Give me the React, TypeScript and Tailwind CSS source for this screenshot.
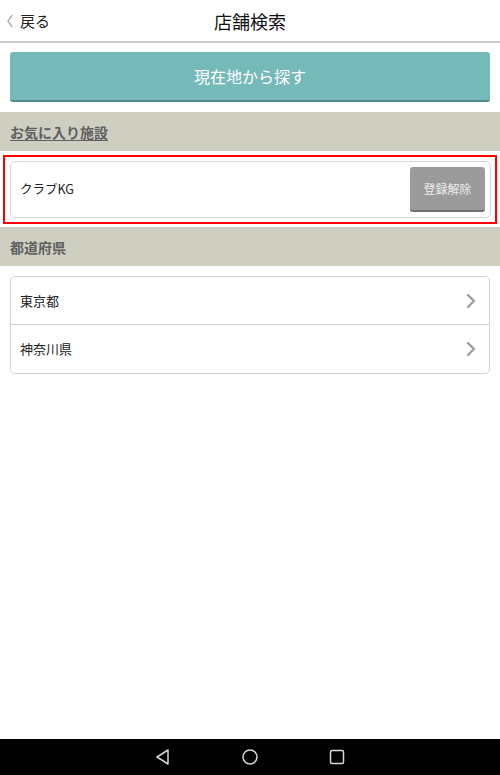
import React from "react";

const Chevron = () => (
  <svg width="10" height="16" viewBox="0 0 10 16" fill="none">
    <path d="M2 2l6 6-6 6" stroke="#9a9a9a" strokeWidth="2.2" strokeLinecap="round" strokeLinejoin="round" />
  </svg>
);

export default function App() {
  return (
    <div
      className="w-[500px] h-[775px] flex flex-col bg-white overflow-hidden"
      style={{ fontFamily: '"Noto Sans CJK JP", "Noto Sans", sans-serif' }}
    >
      <div className="flex-1 flex flex-col">
        {/* Header */}
        <div className="relative h-[43px] flex items-center justify-center border-b-2 border-[#c9c9c9] shrink-0">
          <div className="absolute left-[6px] top-0 h-full flex items-center gap-[6px]">
            <svg width="8" height="14" viewBox="0 0 8 14" fill="none">
              <path d="M6 1.5L2 7l4 5.5" stroke="#b0b0b0" strokeWidth="1.5" strokeLinecap="round" strokeLinejoin="round" />
            </svg>
            <span className="text-[15px] text-[#222] leading-none">戻る</span>
          </div>
          <span className="text-[18px] text-[#111] leading-none">店舗検索</span>
        </div>

        {/* Location button */}
        <div className="px-[10px] pt-[9px] pb-[10px]">
          <button className="w-full h-[50px] rounded-[3px] bg-[#76b9b9] border-b-2 border-[#4d8c8b] text-white text-[16px] leading-none">
            現在地から探す
          </button>
        </div>

        {/* Favorites section */}
        <div className="h-[39px] bg-[#cecec1] flex items-center px-[10px]">
          <span className="text-[14px] text-[#5f5f5f] font-bold underline underline-offset-2 leading-none">お気に入り施設</span>
        </div>
        <div className="pt-[4px] pb-[3px] px-[3px]">
          <div className="border-2 border-[#ff0000] py-[4px] pl-[5px] pr-[4px]">
            <div className="h-[57px] rounded-[5px] border border-[#d6d6d6] flex items-center justify-between pl-[9px] pr-[5px]">
              <span className="text-[12.5px] text-[#222]">クラブKG</span>
              <button className="w-[75px] h-[45px] rounded-[3px] bg-[#9b9b9b] border-b-2 border-[#707070] text-[12px] text-[#ececec]">
                登録解除
              </button>
            </div>
          </div>
        </div>

        {/* Prefecture section */}
        <div className="h-[39px] bg-[#cecec1] flex items-center px-[10px]">
          <span className="text-[14px] text-[#5f5f5f] font-bold leading-none">都道府県</span>
        </div>
        <div className="px-[10px] pt-[10px]">
          <div className="rounded-[5px] border border-[#d3d3d3] flex flex-col">
            <div className="h-[48px] flex items-center justify-between pl-[9px] pr-[13px] border-b border-[#d3d3d3]">
              <span className="text-[13px] text-[#222]">東京都</span>
              <Chevron />
            </div>
            <div className="h-[48px] flex items-center justify-between pl-[9px] pr-[13px]">
              <span className="text-[13px] text-[#222]">神奈川県</span>
              <Chevron />
            </div>
          </div>
        </div>
      </div>

      {/* Android nav bar */}
      <div className="h-[36px] bg-black flex items-center justify-center gap-[69px] shrink-0">
        <svg width="18" height="18" viewBox="0 0 18 18" fill="none">
          <path d="M14 2L3 9l11 7z" stroke="#d8d8d8" strokeWidth="1.5" strokeLinejoin="round" />
        </svg>
        <svg width="18" height="18" viewBox="0 0 18 18" fill="none">
          <circle cx="9" cy="9" r="7" stroke="#d8d8d8" strokeWidth="1.5" />
        </svg>
        <svg width="18" height="18" viewBox="0 0 18 18" fill="none">
          <rect x="2.5" y="2.5" width="13" height="13" rx="1.5" stroke="#d8d8d8" strokeWidth="1.5" />
        </svg>
      </div>
    </div>
  );
}
